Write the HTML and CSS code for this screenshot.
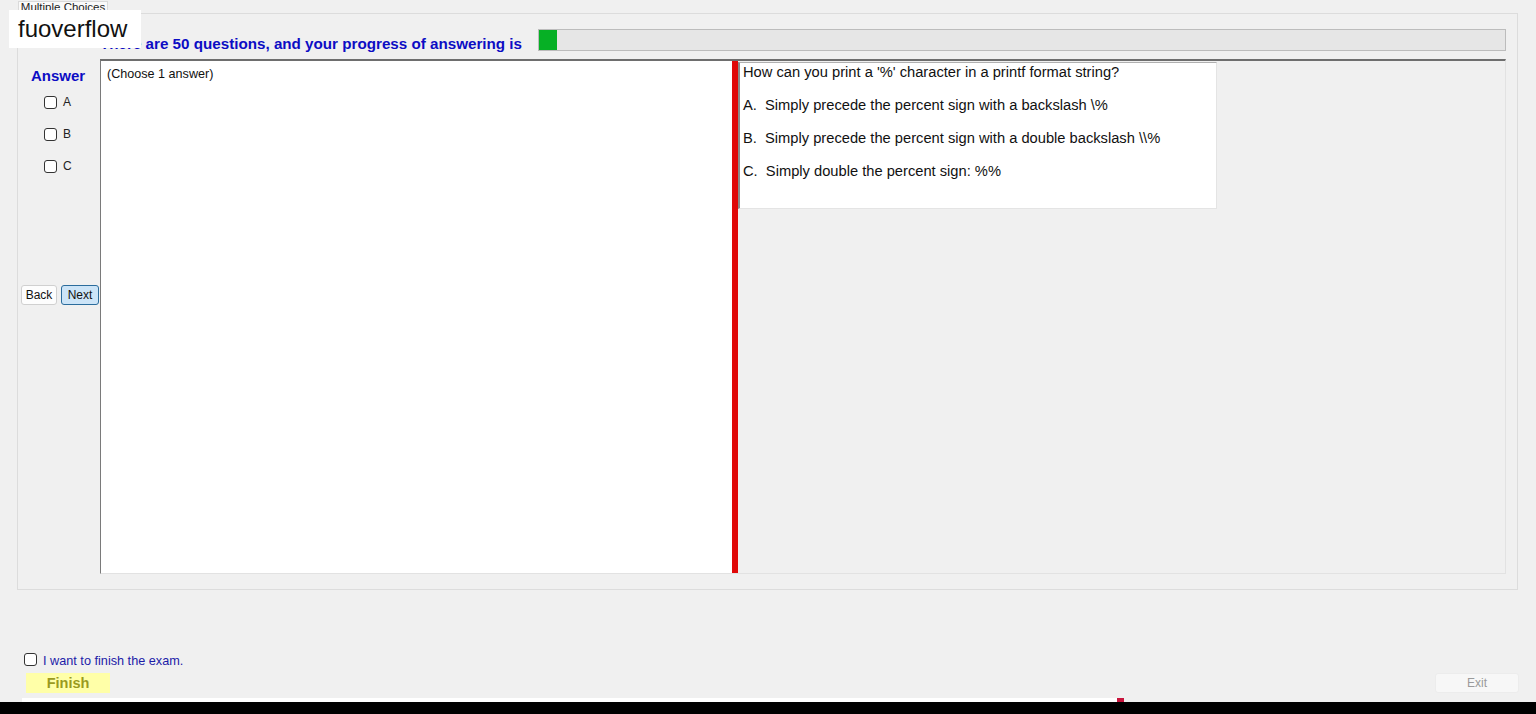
FILE: index.html
```html
<!DOCTYPE html>
<html lang="en">
<head>
  <meta charset="UTF-8" />
  <title>Multiple Choices</title>
  <link rel="stylesheet" href="styles.css">
</head>
<body>

  <div class="tab-strip">
    <div class="tab">Multiple Choices</div>
  </div>

  <div class="tab-pane">
    <div class="header-row">
      <h1 class="progress-text">There are 50 questions, and your progress of answering is</h1>
      <div class="progress"><div class="progress-fill" style="width: 18px"></div></div>
    </div>

    <div class="side">
      <div class="answer-title">Answer</div>
      <label class="choice"><span class="box"></span>A</label>
      <label class="choice"><span class="box"></span>B</label>
      <label class="choice"><span class="box"></span>C</label>
      <div class="nav">
        <button class="btn">Back</button>
        <button class="btn btn-next">Next</button>
      </div>
    </div>

    <div class="panel">
      <div class="answer-box">(Choose 1 answer)</div>
      <div class="divider"></div>
      <div class="question-area">
        <div class="question-box">
          <p>How can you print a '%' character in a printf format string?</p>
          <p>A.&nbsp; Simply precede the percent sign with a backslash \%</p>
          <p>B.&nbsp; Simply precede the percent sign with a double backslash \\%</p>
          <p>C.&nbsp; Simply double the percent sign: %%</p>
        </div>
      </div>
    </div>
  </div>

  <div class="footer">
    <label class="finish-check"><span class="box"></span><span class="finish-label">I want to finish the exam.</span></label>
    <div class="footer-buttons">
      <button class="btn-finish">Finish</button>
      <button class="btn-exit">Exit</button>
    </div>
  </div>

  <div class="scroll-line"><span class="scroll-mark"></span></div>
  <div class="taskbar"></div>

  <div class="watermark">fuoverflow</div>

</body>
</html>
```

FILE: styles.css
```css
body {
  font-family: "Liberation Sans", Arial, sans-serif;
  background-color: #f0f0f0;
  margin: 0;
  width: 1536px;
  height: 714px;
  overflow: hidden;
  position: relative;
}

.tab-strip {
  height: 13px;
  padding-left: 18px;
}

.tab {
  display: inline-block;
  width: 90px;
  height: 13px;
  background-color: #fafafa;
  border: 1px solid #dadada;
  border-bottom: none;
  box-sizing: border-box;
  font-size: 11.5px;
  line-height: 11px;
  text-align: center;
  color: #222;
  overflow: hidden;
}

.tab-pane {
  margin-left: 17px;
  width: 1501px;
  height: 577px;
  box-sizing: border-box;
  border: 1px solid #dcdcdc;
  background-color: #f0f0f0;
  display: grid;
  grid-template-columns: 82px 1fr;
  grid-template-rows: 22px 515px;
  row-gap: 8px;
  padding: 15px 11px 0 0;
}

.header-row {
  grid-column: 2;
  display: flex;
  align-items: flex-end;
}

.progress-text {
  margin: 0;
  width: 422px;
  font-size: 15.2px;
  font-weight: bold;
  color: #0c0cc4;
  white-space: nowrap;
  line-height: 16px;
  margin-bottom: -1px;
}

.progress {
  flex: 1;
  height: 22px;
  margin-left: 16px;
  background-color: #e6e6e6;
  border: 1px solid #bcbcbc;
  box-sizing: border-box;
}

.progress-fill {
  height: 20px;
  background-color: #06b025;
}

.side {
  padding-top: 8px;
}

.answer-title {
  margin-left: 13px;
  font-size: 15px;
  font-weight: bold;
  color: #0c0cc4;
  margin-bottom: 11px;
}

.choice {
  display: flex;
  align-items: center;
  gap: 6px;
  margin-left: 26px;
  height: 14px;
  margin-bottom: 18px;
  font-size: 12px;
  color: #222;
}

.box {
  display: inline-block;
  width: 13px;
  height: 13px;
  box-sizing: border-box;
  border: 1px solid #333;
  border-radius: 3px;
  background-color: #fff;
}

.nav {
  display: flex;
  gap: 4px;
  margin-top: 112px;
  margin-left: 3px;
}

.btn {
  height: 20px;
  width: 36px;
  padding: 0;
  font-family: "Liberation Sans", Arial, sans-serif;
  font-size: 12px;
  color: #111;
  background-color: #fdfdfd;
  border: 1px solid #d0d0d0;
  border-radius: 3px;
}

.btn-next {
  width: 38px;
  background-color: #cce4f7;
  border-color: #2b6c9c;
}

.panel {
  display: flex;
  border-top: 2px solid #6e6e6e;
  border-left: 1px solid #7a7a7a;
  border-bottom: 1px solid #e2e2e2;
  border-right: 1px solid #e2e2e2;
}

.answer-box {
  width: 625px;
  background-color: #fff;
  padding: 6px 0 0 6px;
  font-size: 12.6px;
  color: #111;
}

.divider {
  width: 6px;
  background-color: #e00808;
}

.question-area {
  flex: 1;
  background-color: #f0f0f0;
  padding-top: 1px;
}

.question-box {
  width: 479px;
  height: 147px;
  box-sizing: border-box;
  background-color: #fff;
  border-left: 2px solid #8a8a8a;
  border-top: 1px solid #b0b0b0;
  border-right: 1px solid #e4e4e4;
  border-bottom: 1px solid #e4e4e4;
  padding: 0 0 0 3px;
}

.question-box p {
  margin: -1px 0 14px;
  font-size: 14.7px;
  line-height: 20px;
  color: #111;
}

.footer {
  padding: 62px 0 0 24px;
}

.finish-check {
  display: flex;
  align-items: center;
  gap: 6px;
  font-size: 12.7px;
  color: #1c1ca8;
  height: 14px;
}

.finish-label {
  position: relative;
  top: 2px;
}

.footer-buttons {
  display: flex;
  justify-content: space-between;
  padding: 7px 17px 0 2px;
}

.btn-finish {
  width: 84px;
  height: 20px;
  border: none;
  background-color: #ffffa8;
  color: #9a9a1e;
  font-family: "Liberation Sans", Arial, sans-serif;
  font-weight: bold;
  font-size: 14.5px;
  padding: 0;
}

.btn-exit {
  width: 84px;
  height: 20px;
  border: 1px solid #ececec;
  border-radius: 3px;
  background-color: #f7f7f7;
  color: #9a9a9a;
  font-family: "Liberation Sans", Arial, sans-serif;
  font-size: 12px;
  padding: 0;
}

.scroll-line {
  position: absolute;
  left: 22px;
  top: 698px;
  width: 1102px;
  height: 4px;
  background-color: #fff;
  display: flex;
  justify-content: flex-end;
}

.scroll-mark {
  width: 7px;
  height: 4px;
  background-color: #c8143c;
}

.taskbar {
  position: absolute;
  left: 0;
  top: 702px;
  width: 1536px;
  height: 12px;
  background-color: #000;
}

.watermark {
  position: absolute;
  left: 9px;
  top: 10px;
  width: 132px;
  height: 38px;
  background-color: #fff;
  font-size: 24px;
  line-height: 38px;
  padding-left: 9px;
  box-sizing: border-box;
  color: #111;
}
```
